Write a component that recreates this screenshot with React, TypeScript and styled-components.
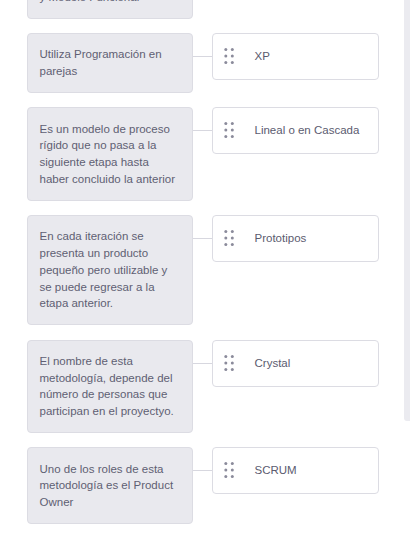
import * as React from "react";
import styled, { createGlobalStyle } from "styled-components";

const GlobalStyle = createGlobalStyle`
  html, body {
    margin: 0;
    padding: 0;
    background: #ffffff;
    overflow: hidden;
  }
  body {
    font-family: "Liberation Sans", Arial, sans-serif;
  }
`;

const Page = styled.main`
  position: relative;
  height: 541px;
  overflow: hidden;
`;

const Board = styled.section`
  display: flex;
  flex-direction: column;
  gap: 14.25px;
  margin-top: -58px;
  padding-left: 26.5px;
`;

const Row = styled.div`
  display: flex;
  align-items: flex-start;
`;

const Prompt = styled.div`
  box-sizing: border-box;
  width: 166.5px;
  flex-shrink: 0;
  padding: 12.25px 12px;
  background: #e9e9ee;
  border: 1px solid #dcdce3;
  border-radius: 4px;
  color: #5f5f73;
  font-size: 11.5px;
  line-height: 16.75px;
`;

const Connector = styled.div`
  width: 19px;
  height: 1px;
  margin-top: 23px;
  background: #d7d7df;
  flex-shrink: 0;
`;

const Answer = styled.div`
  box-sizing: border-box;
  width: 167px;
  height: 47px;
  display: flex;
  align-items: center;
  gap: 20px;
  padding: 0 10px 0 10.5px;
  background: #ffffff;
  border: 1px solid #dcdce3;
  border-radius: 4px;
  color: #5b5b6f;
  font-size: 11.5px;
  line-height: 16.75px;
`;

const Handle = styled.svg`
  flex-shrink: 0;
  display: block;
  margin-top: -1px;
`;

const ScrollTrack = styled.div`
  position: absolute;
  top: 0;
  right: 0;
  width: 6px;
  height: 421px;
  background: #ebebf0;
  border-bottom-left-radius: 3px;
`;

const DragDots = () => (
  <Handle width="11" height="16" viewBox="0 0 11 16">
    {[1.5, 8].map((x) =>
      [1.6, 8, 14.4].map((y) => (
        <circle key={`${x}-${y}`} cx={x + 0.3} cy={y} r="1.5" fill="#8b8b9b" />
      ))
    )}
  </Handle>
);

const items: { prompt: React.ReactNode; answer: string }[] = [
  {
    prompt: (
      <>
        Combina el Modelo
        <br />
        Lineal o en Cascada
        <br />y Modelo Funcional
      </>
    ),
    answer: "Incremental",
  },
  { prompt: "Utiliza Programación en parejas", answer: "XP" },
  {
    prompt:
      "Es un modelo de proceso rígido que no pasa a la siguiente etapa hasta haber concluido la anterior",
    answer: "Lineal o en Cascada",
  },
  {
    prompt:
      "En cada iteración se presenta un producto pequeño pero utilizable y se puede regresar a la etapa anterior.",
    answer: "Prototipos",
  },
  {
    prompt:
      "El nombre de esta metodología, depende del número de personas que participan en el proyectyo.",
    answer: "Crystal",
  },
  {
    prompt: "Uno de los roles de esta metodología es el Product Owner",
    answer: "SCRUM",
  },
];

const App: React.FunctionComponent = () => {
  return (
    <Page>
      <GlobalStyle />
      <Board>
        {items.map((item) => (
          <Row key={item.answer}>
            <Prompt>{item.prompt}</Prompt>
            <Connector />
            <Answer>
              <DragDots />
              <span>{item.answer}</span>
            </Answer>
          </Row>
        ))}
      </Board>
      <ScrollTrack />
    </Page>
  );
};

export default App;
